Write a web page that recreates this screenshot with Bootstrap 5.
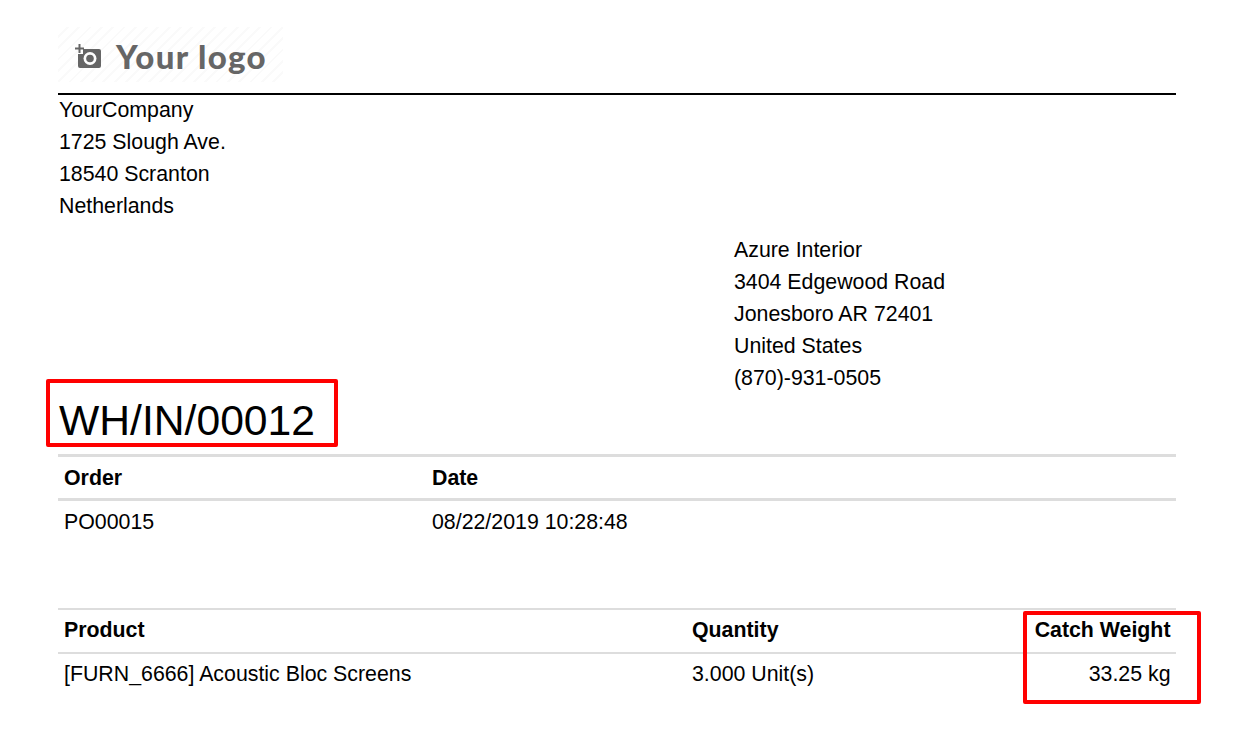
<!DOCTYPE html>
<html lang="en">
<head>
<meta charset="utf-8">
<title>WH/IN/00012</title>
<link href="https://cdn.jsdelivr.net/npm/bootstrap@5.3.0/dist/css/bootstrap.min.css" rel="stylesheet">
<style>
html,body{height:746px;overflow:hidden}
body{font-family:"Liberation Sans",Arial,sans-serif;font-size:21.33px;line-height:32px;color:#000;background:#fff}
.sheet{position:relative;margin-left:58px;width:1118px;padding-top:27px}
.logo-box{width:225px;height:55px;gap:15px;padding:4px 0 0 17px;background:repeating-linear-gradient(135deg,#fff 0 6px,#fafafa 6px 8px)}
.logo-word{font-family:Lato,sans-serif;font-weight:900;font-size:33px;line-height:1;letter-spacing:1.35px;color:#666}
.head-rule{border-top:2px solid #000;margin-top:11px;padding-left:1px;line-height:32px;margin-bottom:0}
.addr-line{position:relative;top:-1px}
.to-block{margin:12px 0 0 676px}
.doc-title{font-size:42.67px;line-height:50px;font-weight:400;margin:0 0 0 1px;height:59px}
.sheet-table{width:100%;margin:0;table-layout:fixed;border-collapse:collapse}
.sheet-table th,.sheet-table td{padding:6px;line-height:32px;font-size:21.33px;color:#000;background:none;box-shadow:none;white-space:nowrap}
.sheet-table td{height:44px;border:0;padding-top:5px;padding-bottom:7px}
.sheet-table th{font-weight:700;padding-top:4px;padding-bottom:4px;height:44px}
.info th{border-top:3px solid #ddd;border-bottom:3px solid #ddd}
.lines{margin-top:63px}
.lines th{border-top:2px solid #ddd;border-bottom:2px solid #ddd;padding-top:4px;padding-bottom:6px}
.lines td{padding-top:4px;padding-bottom:8px}
.lines .text-end{padding-right:5.500px}
.mark-box{position:absolute;border:4px solid #f00;border-radius:2px;pointer-events:none}
.mark-a{left:-12px;top:379px;width:292px;height:68px}
.mark-b{left:965px;top:611px;width:178px;height:93px}
</style>
</head>
<body>
<div class="sheet">
  <div class="logo-box d-flex align-items-center">
    <svg width="26" height="25" viewBox="0 0 26 25" aria-hidden="true">
      <path fill="#666" d="M8 5h16a2 2 0 0 1 2 2v15a2 2 0 0 1-2 2H5a2 2 0 0 1-2-2V10h5z"/>
      <circle cx="15" cy="14.500" r="6.500" fill="#fff"/><circle cx="15" cy="14.500" r="3.800" fill="#666"/>
      <path stroke="#666" stroke-width="2" d="M4.500 0v9M0 4.500h9"/>
    </svg>
    <span class="logo-word">Your logo</span>
  </div>
  <div class="head-rule">
    <div class="addr-line">YourCompany</div>
    <div class="addr-line">1725 Slough Ave.</div>
    <div class="addr-line">18540 Scranton</div>
    <div class="addr-line">Netherlands</div>
  </div>
  <div class="to-block">
    <div class="addr-line">Azure Interior</div>
    <div class="addr-line">3404 Edgewood Road</div>
    <div class="addr-line">Jonesboro AR 72401</div>
    <div class="addr-line">United States</div>
    <div class="addr-line">(870)-931-0505</div>
  </div>
  <h1 class="doc-title">WH/IN/00012</h1>
  <table class="table sheet-table info">
    <colgroup><col style="width:368px"><col></colgroup>
    <thead><tr><th>Order</th><th>Date</th></tr></thead>
    <tbody><tr><td>PO00015</td><td>08/22/2019 10:28:48</td></tr></tbody>
  </table>
  <table class="table sheet-table lines">
    <colgroup><col style="width:628px"><col style="width:328px"><col></colgroup>
    <thead><tr><th>Product</th><th>Quantity</th><th class="text-end">Catch Weight</th></tr></thead>
    <tbody><tr><td>[FURN_6666] Acoustic Bloc Screens</td><td>3.000 Unit(s)</td><td class="text-end">33.25 kg</td></tr></tbody>
  </table>
  <div class="mark-box mark-a"></div>
  <div class="mark-box mark-b"></div>
</div>
<script src="https://cdn.jsdelivr.net/npm/bootstrap@5.3.0/dist/js/bootstrap.bundle.min.js"></script>
</body>
</html>
